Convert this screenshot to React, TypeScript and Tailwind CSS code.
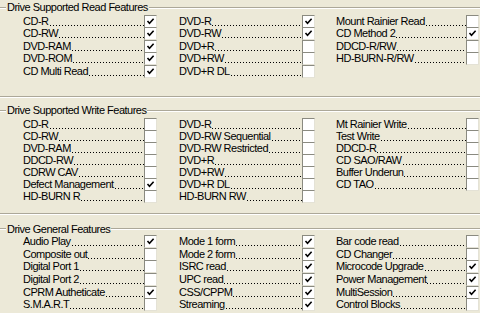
import React from "react";

type Item = [string, boolean];

interface Group {
    title: string;
    cols: Item[][];
}

const groups: Group[] = [
    {
        title: "Drive Supported Read Features",
        cols: [
            [["CD-R", true], ["CD-RW", true], ["DVD-RAM", true], ["DVD-ROM", true], ["CD Multi Read", true]],
            [["DVD-R", true], ["DVD-RW", true], ["DVD+R", false], ["DVD+RW", false], ["DVD+R DL", false]],
            [["Mount Rainier Read", false], ["CD Method 2", true], ["DDCD-R/RW", false], ["HD-BURN-R/RW", false]],
        ],
    },
    {
        title: "Drive Supported Write Features",
        cols: [
            [["CD-R", false], ["CD-RW", false], ["DVD-RAM", false], ["DDCD-RW", false], ["CDRW CAV", false], ["Defect Management", true], ["HD-BURN R", false]],
            [["DVD-R", false], ["DVD-RW Sequential", false], ["DVD-RW Restricted", false], ["DVD+R", false], ["DVD+RW", false], ["DVD+R DL", false], ["HD-BURN RW", false]],
            [["Mt Rainier Write", false], ["Test Write", false], ["DDCD-R", false], ["CD SAO/RAW", false], ["Buffer Underun", false], ["CD TAO", false]],
        ],
    },
    {
        title: "Drive General Features",
        cols: [
            [["Audio Play", true], ["Composite out", false], ["Digital Port 1", false], ["Digital Port 2", false], ["CPRM Autheticate", true], ["S.M.A.R.T", false]],
            [["Mode 1 form", true], ["Mode 2 form", true], ["ISRC read", true], ["UPC read", true], ["CSS/CPPM", true], ["Streaming", true]],
            [["Bar code read", false], ["CD Changer", false], ["Microcode Upgrade", true], ["Power Management", true], ["MultiSession", true], ["Control Blocks", false]],
        ],
    },
];

const colWidths = ["w-[134px]", "w-[136px] ml-[22px]", "w-[143px] ml-[21px]"];

const Etched = ({ className = "" }: { className?: string }) => (
    <div className={`h-[2px] border-t border-t-[#aca899] border-b border-b-white ${className}`} />
);

const CheckBox = ({ checked }: { checked: boolean }) => (
    <div className="w-[13px] h-[13px] shrink-0 bg-white border border-t-[#8a8a80] border-l-[#8a8a80] border-r-[#e4e2d6] border-b-[#e4e2d6] flex items-center justify-center">
        {checked && (
            <svg width="9" height="9" viewBox="0 0 9 9">
                <path d="M1.5 4 L3.5 6.2 L7.6 1.8" fill="none" stroke="#000" strokeWidth="1.6" />
            </svg>
        )}
    </div>
);

// dotted leader drawn as a 1px dot every 3px on the text baseline
const Leader = () => (
    <div className="flex-1 h-[13px] ml-[1px] bg-[linear-gradient(to_right,#000_1px,transparent_1px)] bg-[length:3px_1px] bg-[position:0_10px] bg-repeat-x" />
);

const Row = ({ label, checked, rowH }: { label: string; checked: boolean; rowH: string }) => (
    <div className={`flex items-center ${rowH}`}>
        <span className="whitespace-nowrap">{label}</span>
        <Leader />
        <CheckBox checked={checked} />
    </div>
);

const GroupBox = ({ group, rowH, bodyPad }: { group: Group; rowH: string; bodyPad: string }) => (
    <div className="flex flex-col">
        <div className="flex items-center h-[13px]">
            <Etched className="w-[6px]" />
            <span className="px-[1px] whitespace-nowrap">{group.title}</span>
            <Etched className="flex-1" />
        </div>
        <div className={`flex pl-[23px] ${bodyPad}`}>
            {group.cols.map((col, ci) => (
                <div key={ci} className={`flex flex-col ${colWidths[ci]}`}>
                    {col.map(([label, checked]) => (
                        <Row key={label} label={label} checked={checked} rowH={rowH} />
                    ))}
                </div>
            ))}
        </div>
        <Etched />
    </div>
);

export default function App() {
    return (
        <div
            className="w-[480px] h-[313px] overflow-hidden bg-[#ece9d8] text-black text-[11px] leading-[13px] tracking-[-0.5px] pt-[1px] flex flex-col"
            style={{ fontFamily: '"Liberation Sans", Arial, sans-serif' }}
        >
            <GroupBox group={groups[0]} rowH="h-[12.5px]" bodyPad="pt-[1px] pb-[18.5px]" />
            <div className="h-[6px] shrink-0" />
            <GroupBox group={groups[1]} rowH="h-[12px]" bodyPad="pt-[1.5px] pb-[10.5px]" />
            <div className="h-[7.5px] shrink-0" />
            <GroupBox group={groups[2]} rowH="h-[12.6px]" bodyPad="pt-0 pb-[8px]" />
        </div>
    );
}
